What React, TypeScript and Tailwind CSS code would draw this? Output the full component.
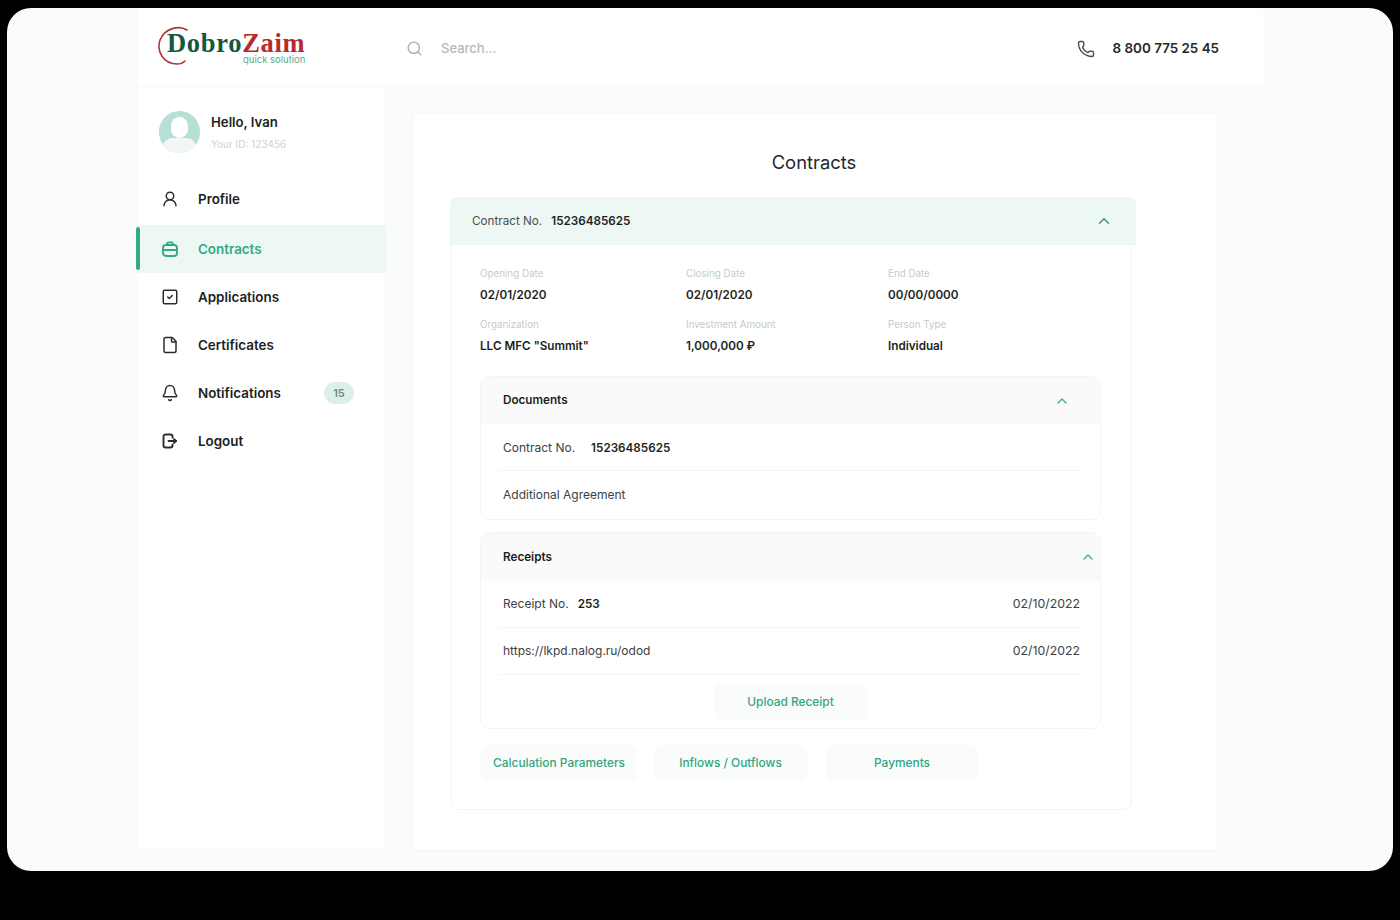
import React from "react";
import { ChevronUp, Search, Phone, UserRound, SquareCheck, File, Bell } from "lucide-react";

const navCls = "flex items-center h-[48.2px] pl-[23px] pr-[31px] text-[13.4px] font-semibold text-[#1c1f22]";

function BriefcaseIcon() {
  return (
    <svg width="18" height="18" viewBox="0 0 18 18" fill="none" stroke="currentColor" strokeWidth="1.9" strokeLinecap="round" strokeLinejoin="round">
      <rect x="2" y="5" width="14" height="11" rx="3" />
      <path d="M6.2 5V3.6a1.2 1.2 0 0 1 1.2-1.2h3.2a1.2 1.2 0 0 1 1.2 1.2V5" />
      <path d="M2 10h14" />
    </svg>
  );
}

function LogoutIcon() {
  return (
    <svg width="18" height="18" viewBox="0 0 18 18" fill="none" stroke="#2b2e30" strokeWidth="1.9" strokeLinecap="round" strokeLinejoin="round">
      <path d="M11.5 5.5V4.5a2 2 0 0 0-2-2H4.5a2 2 0 0 0-2 2v9a2 2 0 0 0 2 2h5a2 2 0 0 0 2-2v-1" />
      <path d="M7.5 9h6" />
      <path d="M13 6.6 16 9l-3 2.4z" fill="#2b2e30" strokeWidth="1" />
    </svg>
  );
}

function Field({ label, value, w }: { label: string; value: string; w: string }) {
  return (
    <div className={`${w} shrink-0`}>
      <div className="mt-[1px] text-[9.8px] leading-[12px] text-[#c6cacb]">{label}</div>
      <div className="mt-[8px] text-[11.7px] leading-[14px] font-semibold text-[#1c1f22]">{value}</div>
    </div>
  );
}

function Row({ left, strong, gap, right, shift }: { left: string; strong?: string; gap?: string; right?: string; shift?: boolean }) {
  return (
    <div className={`flex items-center h-[47px] mx-[18px] pl-[4px] pr-[2px] border-b border-[#f3f5f5] text-[12px] text-[#3d4144] ${shift ? "pt-[2px]" : ""}`}>
      <span>{left}</span>
      {strong && <span className={`${gap} mt-[1px] text-[11.7px] font-semibold text-[#1c1f22]`}>{strong}</span>}
      {right && <span className="ml-auto text-[12.3px]">{right}</span>}
    </div>
  );
}

function TabBtn({ label, w }: { label: string; w: string }) {
  return (
    <div className={`${w} h-[36px] flex items-center justify-center rounded-[6px] bg-[#fafbfb] text-[11.9px] font-medium text-[#32a67f]`}>
      {label}
    </div>
  );
}

export default function App() {
  return (
    <div className="w-[1400px] h-[920px] bg-black overflow-hidden pt-[8px] px-[7px] font-['Inter','Liberation_Sans',sans-serif]">
      <div className="h-[863px] rounded-[24px] bg-[#f9fbfc] pl-[131px] pt-[1px] overflow-hidden">
        <header className="w-[1125px] h-[77px] bg-white flex items-center pt-[2px] pl-[19px] pr-[44px]">
          <div className="relative w-[150px] h-[46px] shrink-0">
            <svg className="absolute left-0 top-0" width="34" height="42" viewBox="0 0 34 42" fill="none">
              <path d="M30 4 C22 -1 8 2 3 14 C-1 26 7 38 20 38 C24 38 26 37 28 35" stroke="#b3343c" strokeWidth="1.6" strokeLinecap="round" />
            </svg>
            <div className="absolute left-[10px] top-[5px] font-['Liberation_Serif',serif] font-bold text-[26.5px] leading-[24px] tracking-[0.7px] whitespace-nowrap">
              <span className="text-[#14593f]">Dobro</span>
              <span className="text-[#b92a2e]">Zaim</span>
            </div>
            <div className="absolute left-[86px] top-[29px] text-[9.5px] leading-[10px] text-[#5fa88d] whitespace-nowrap">quick solution</div>
          </div>
          <Search className="ml-[99px] text-[#a6abad]" size={17} strokeWidth={1.8} />
          <span className="ml-[18px] text-[13px] font-medium text-[#b4b8ba]">Search...</span>
          <Phone className="ml-auto text-[#4a4e50]" size={18} strokeWidth={1.9} />
          <span className="ml-[18px] text-[13.4px] font-semibold text-[#25282a] whitespace-nowrap">8 800 775 25 45</span>
        </header>

        <div className="flex items-start">
          <aside className="w-[248px] h-[760px] mt-[2px] bg-white border-r border-[#f1f4f5] pt-[23px] shrink-0">
            <div className="flex items-center pl-[21px] h-[42px]">
              <div className="relative w-[41px] h-[42px] rounded-full bg-[#b6dfd5] overflow-hidden shrink-0">
                <div className="absolute left-[12px] top-[6px] w-[17px] h-[21px] rounded-full bg-white" />
                <div className="absolute left-[3px] top-[27px] w-[35px] h-[22px] rounded-full bg-[#f2f7f6]" />
              </div>
              <div className="ml-[11px] mt-[1px]">
                <div className="text-[13.2px] leading-[18px] -mt-[2px] font-semibold text-[#1c1f22]">Hello, Ivan</div>
                <div className="mt-[7px] text-[10px] leading-[12px] text-[#cfd3d4]">Your ID: 123456</div>
              </div>
            </div>
            <nav className="mt-[22px]">
              <div className="flex items-center h-[49.6px] pb-[1px] pl-[23px] pr-[31px] text-[13.4px] font-semibold text-[#1c1f22]">
                <UserRound size={18} strokeWidth={2} className="text-[#2b2e30]" />
                <span className="ml-[19px]">Profile</span>
              </div>
              <div className="flex items-center h-[48.2px] pl-[23px] pr-[31px] text-[13.4px] font-semibold text-[#35a884] bg-[#edf8f5] relative">
                <div className="absolute left-[-2px] top-[2px] w-[4px] h-[43px] rounded-[2px] bg-[#35a884]" />
                <BriefcaseIcon />
                <span className="ml-[19px]">Contracts</span>
              </div>
              <div className={navCls}>
                <SquareCheck size={18} strokeWidth={2} className="text-[#2b2e30]" />
                <span className="ml-[19px]">Applications</span>
              </div>
              <div className={navCls}>
                <File size={18} strokeWidth={2} className="text-[#2b2e30]" />
                <span className="ml-[19px]">Certificates</span>
              </div>
              <div className={navCls}>
                <Bell size={18} strokeWidth={2} className="text-[#2b2e30]" />
                <span className="ml-[19px]">Notifications</span>
                <span className="ml-auto w-[30px] h-[22px] rounded-full bg-[#dcefe9] flex items-center justify-center text-[11px] font-semibold text-[#6b8f84]">15</span>
              </div>
              <div className={navCls}>
                <LogoutIcon />
                <span className="ml-[19px]">Logout</span>
              </div>
            </nav>
          </aside>

          <main className="ml-[26px] mt-[27px] w-[806px] h-[738px] bg-white border border-[#f3f6f6] rounded-[6px] pt-[35px] pl-[37px] shrink-0">
            <h1 className="w-[728px] text-center text-[18.4px] leading-[26px] font-normal text-[#25282a]">Contracts</h1>
            <div className="mt-[22px] w-[686px] h-[48px] rounded-t-[8px] bg-[#edf8f5] flex items-center pl-[22px] pr-[23px] text-[11.7px] text-[#4a4e50]">
              <span className="mt-[1px]">Contract No.</span>
              <span className="ml-[9px] mt-[1px] font-semibold text-[#1c1f22]">15236485625</span>
              <ChevronUp className="ml-auto text-[#4f8f7d]" size={18} strokeWidth={2} />
            </div>
            <div className="w-[681px] ml-[1px] h-[565px] border border-t-0 border-[#f1f5f5] rounded-b-[8px] pt-[22px] pl-[28px]">
              <div className="flex">
                <Field w="w-[206px]" label="Opening Date" value="02/01/2020" />
                <Field w="w-[202px]" label="Closing Date" value="02/01/2020" />
                <Field w="w-[200px]" label="End Date" value="00/00/0000" />
              </div>
              <div className="flex mt-[16px]">
                <Field w="w-[206px]" label="Organization" value={'LLC MFC "Summit"'} />
                <Field w="w-[202px]" label="Investment Amount" value="1,000,000 ₽" />
                <Field w="w-[200px]" label="Person Type" value="Individual" />
              </div>

              <section className="mt-[23px] w-[621px] h-[144px] border border-[#f3f5f5] rounded-[10px] overflow-hidden">
                <div className="h-[47px] bg-[#fafafa] flex items-center pl-[22px] pr-[30px] text-[11.7px] font-semibold text-[#1c1f22]">
                  <span className="mt-[1px]">Documents</span>
                  <ChevronUp className="ml-auto text-[#46a98a]" size={16} strokeWidth={2} />
                </div>
                <Row left="Contract No." strong="15236485625" gap="ml-[16px]" shift />
                <div className="flex items-center h-[47px] pl-[22px] text-[12px] text-[#3d4144]">Additional Agreement</div>
              </section>

              <section className="mt-[12px] w-[621px] h-[197px] border border-[#f3f5f5] rounded-[10px] overflow-hidden">
                <div className="h-[48px] bg-[#fafafa] flex items-center pl-[22px] pr-[4px] text-[11.7px] font-semibold text-[#1c1f22]">
                  <span className="mt-[1px]">Receipts</span>
                  <ChevronUp className="ml-auto text-[#46a98a]" size={16} strokeWidth={2} />
                </div>
                <Row left="Receipt No." strong="253" gap="ml-[9px]" right="02/10/2022" />
                <Row left="https://lkpd.nalog.ru/odod" right="02/10/2022" />
                <div className="flex justify-center mt-[9px]">
                  <TabBtn label="Upload Receipt" w="w-[154px]" />
                </div>
              </section>

              <div className="mt-[16px] ml-[1px] flex">
                <TabBtn label="Calculation Parameters" w="w-[156px]" />
                <div className="ml-[17px]"><TabBtn label="Inflows / Outflows" w="w-[153px]" /></div>
                <div className="ml-[19px]"><TabBtn label="Payments" w="w-[152px]" /></div>
              </div>
            </div>
          </main>
        </div>
      </div>
    </div>
  );
}
